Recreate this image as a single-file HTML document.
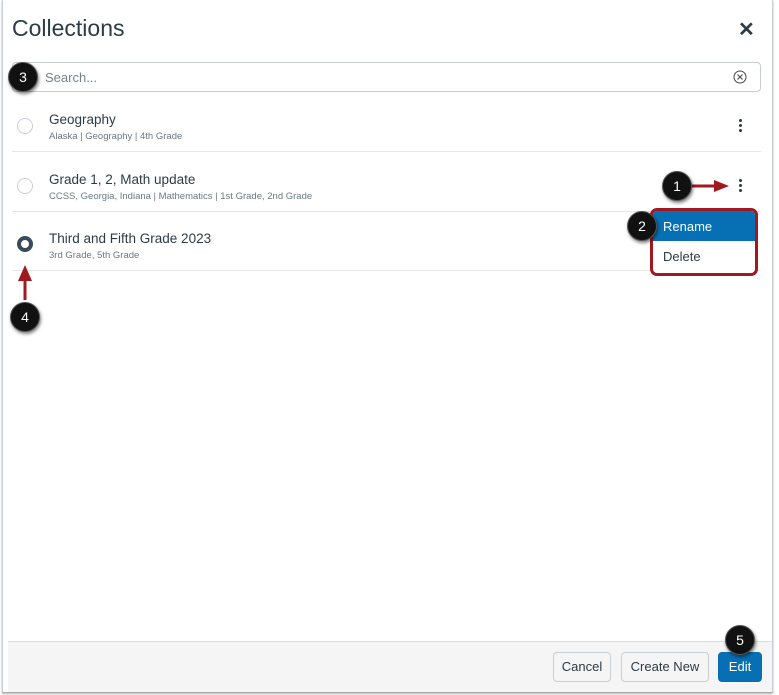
<!DOCTYPE html>
<html><head><meta charset="utf-8"><style>
*{box-sizing:border-box;margin:0;padding:0}
body{width:779px;height:695px;background:#fff;font-family:"Liberation Sans",sans-serif;position:relative;overflow:hidden;color:#2d3b45}
.frame{position:absolute;left:2px;top:0;width:771px;height:693px;border-left:1px solid #c7cdd1;border-right:1px solid #c7cdd1;border-bottom:1px solid #aaa;box-shadow:0 1px 2px rgba(0,0,0,.3)}
.abs{position:absolute}
.title{left:12px;top:15px;font-size:23px;color:#2d3b45}
.x{left:738px;top:17px;font-size:20px;font-weight:bold}
.search{left:12px;top:62px;width:749px;height:30px;border:1px solid #c7cdd1;border-radius:4px}
.search span{position:absolute;left:32px;top:7px;font-size:13px;color:#73818c}
.row{left:12px;width:749px;height:60px;border-bottom:1px solid #e6e6e6}
.radio{position:absolute;left:5px;top:26px;width:16px;height:16px;border:1px solid #ccd;border-radius:50%}
.rt{position:absolute;left:37px;top:20px;font-size:13.5px;color:#2d3b45}
.rs{position:absolute;left:37px;top:39px;font-size:9.5px;color:#6b7780}
.dots{position:absolute;left:727px;top:27px;width:3px}
.dots i{display:block;width:3px;height:3px;background:#2d3b45;border-radius:50%;margin-bottom:2px}
.badge{position:absolute;width:30px;height:30px;border-radius:50%;background:#111;color:#fff;font-size:14px;text-align:center;line-height:29px;box-shadow:1px 2px 3px rgba(0,0,0,.5);border:1px solid #555}
.footer{left:8px;top:641px;width:764px;height:51px;background:#f5f5f5;border-top:1px solid #ddd}
.btn{position:absolute;top:652px;height:30px;border:1px solid #c7cdd1;border-radius:4px;background:#f5f5f5;font-size:13px;line-height:28px;text-align:center;color:#2d3b45}
</style></head><body>
<div class="frame"></div>
<div class="abs title">Collections</div>
<div class="abs x">✕</div>
<div class="abs search"><span>Search...</span>
<svg class="abs" style="left:720px;top:7px" width="14" height="14" viewBox="0 0 14 14"><circle cx="7" cy="7" r="6" fill="none" stroke="#444" stroke-width="1"/><path d="M4.5 4.5L9.5 9.5M9.5 4.5L4.5 9.5" stroke="#444" stroke-width="1"/></svg></div>
<div class="abs row" style="top:92px"><div class="radio"></div><div class="rt">Geography</div><div class="rs">Alaska | Geography | 4th Grade</div><div class="dots"><i></i><i></i><i></i></div></div>
<div class="abs row" style="top:152px"><div class="radio"></div><div class="rt">Grade 1, 2, Math update</div><div class="rs">CCSS, Georgia, Indiana | Mathematics | 1st Grade, 2nd Grade</div><div class="dots"><i></i><i></i><i></i></div></div>
<div class="abs row" style="top:211px"><div class="radio" style="border:4.5px solid #394b58;left:5px;top:25px"></div><div class="rt">Third and Fifth Grade 2023</div><div class="rs">3rd Grade, 5th Grade</div></div>
<div class="abs" style="left:650px;top:208px;width:108px;height:68px;border:3px solid #a01820;border-radius:7px;background:#fff;overflow:hidden">
<div style="height:30px;background:#0770b5;color:#fff;font-size:13px;padding:8px 0 0 10px">Rename</div>
<div style="font-size:13px;padding:8px 0 0 10px">Delete</div></div>
<svg class="abs" style="left:0;top:0" width="779" height="695"><path d="M690 186H716" stroke="#a01820" stroke-width="3"/><path d="M714 180L729 186L714 192Z" fill="#a01820"/><path d="M25 300V278" stroke="#a01820" stroke-width="3"/><path d="M18 281L25 265L32 281Z" fill="#a01820"/></svg>
<div class="badge" style="left:8px;top:62px">3</div>
<div class="badge" style="left:662px;top:171px">1</div>
<div class="badge" style="left:627px;top:211px">2</div>
<div class="badge" style="left:10px;top:302px">4</div>
<div class="abs footer"></div>
<div class="btn" style="left:553px;width:58px">Cancel</div>
<div class="btn" style="left:621px;width:88px">Create New</div>
<div class="btn" style="left:718px;width:44px;background:#0770b5;border-color:#0770b5;color:#fff">Edit</div>
<div class="badge" style="left:725px;top:625px">5</div>
</body></html>
